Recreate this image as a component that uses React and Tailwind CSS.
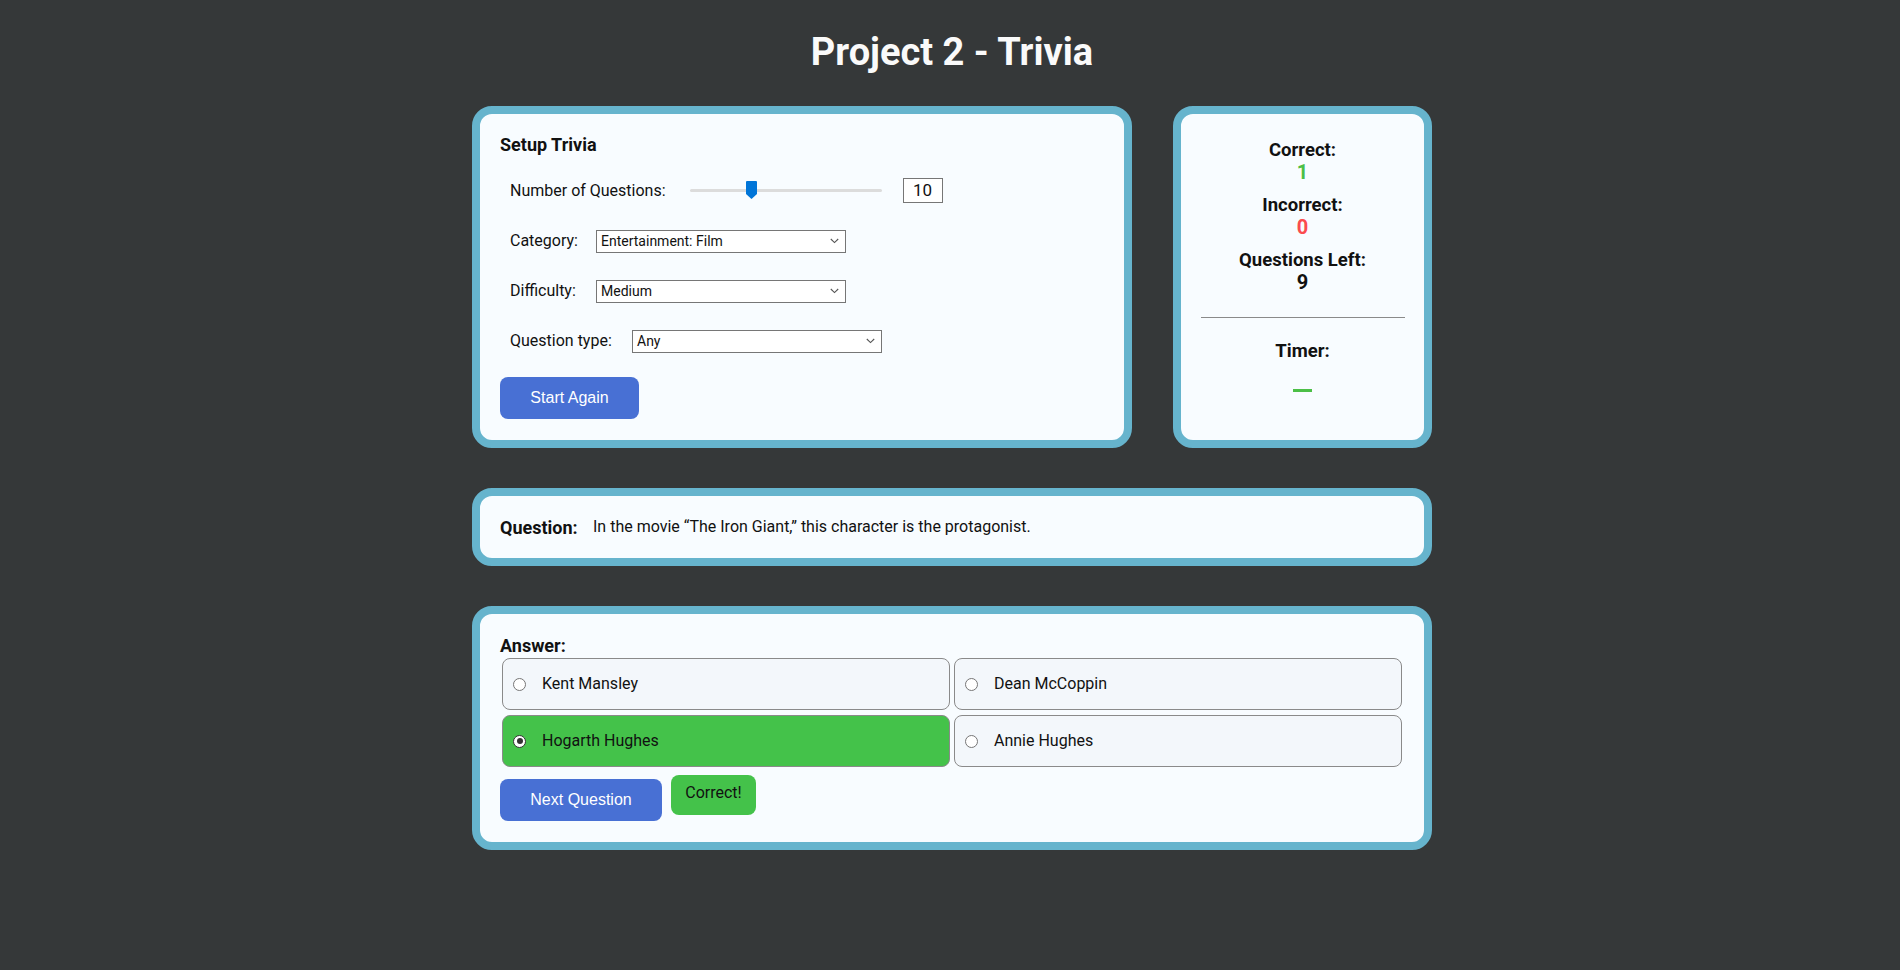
import React from 'react';

const Card = ({ className = '', children }) => (
  <div className={`rounded-[20px] border-[8px] border-[#66b4cd] bg-[#f8fcff] ${className}`}>
    {children}
  </div>
);

const Chevron = () => (
  <svg width="9" height="6" viewBox="0 0 9 6" className="shrink-0">
    <path d="M0.8 1 L4.5 4.6 L8.2 1" fill="none" stroke="#555" strokeWidth="1.1" />
  </svg>
);

const FakeSelect = ({ value, width = 'w-[250px]' }) => (
  <div className={`flex h-[23px] ${width} items-center justify-between border border-[#767676] bg-white pl-[4px] pr-[6px] text-[14px] text-[#111]`}>
    <span>{value}</span>
    <Chevron />
  </div>
);

const Slider = () => (
  <div className="relative h-[25px] w-[192px]">
    <div className="absolute left-0 right-0 top-[11px] h-[3px] rounded-full bg-[#dcdcdc]" />
    <svg width="11" height="18" viewBox="0 0 11 18" className="absolute left-[56px] top-[3px]">
      <path d="M1 0 H10 Q11 0 11 1 V13 L5.5 18 L0 13 V1 Q0 0 1 0 Z" fill="#0075d8" />
    </svg>
  </div>
);

const Radio = ({ checked }) => (
  <span className={`flex h-[13px] w-[13px] shrink-0 items-center justify-center rounded-full border bg-white ${checked ? 'border-[#333]' : 'border-[#767676]'}`}>
    {checked && <span className="h-[6px] w-[6px] rounded-full bg-[#333]" />}
  </span>
);

const answers = [
  { label: 'Kent Mansley', selected: false },
  { label: 'Dean McCoppin', selected: false },
  { label: 'Hogarth Hughes', selected: true },
  { label: 'Annie Hughes', selected: false },
];

export default function App() {
  return (
    <div className="min-h-screen bg-[#353839] pb-[120px] pl-[4px] font-['Roboto',sans-serif] text-[#111]">
      <h1 className="pt-[29px] text-center text-[38px] font-bold leading-[46px] text-[#fafafa]">
        Project 2 - Trivia
      </h1>

      <div className="mx-auto mt-[31px] flex w-[960px] flex-col gap-[40px]">
        <div className="flex gap-[41px]">
          {/* setup */}
          <Card className="h-[342px] w-[660px] px-[20px] pt-[19px]">
            <h3 className="text-[18px] font-bold leading-[24px]">Setup Trivia</h3>

            <div className="mt-[21px] flex h-[25px] items-center pl-[10px] text-[16px]">
              <span className="w-[180px]">Number of Questions:</span>
              <Slider />
              <div className="ml-[21px] flex h-[25px] w-[40px] items-center border border-[#767676] bg-white pl-[9px] text-[17px]">
                10
              </div>
            </div>

            <div className="mt-[26px] flex items-center pl-[10px] text-[16px]">
              <span className="w-[86px]">Category:</span>
              <FakeSelect value="Entertainment: Film" />
            </div>

            <div className="mt-[26px] flex items-center pl-[10px] text-[16px]">
              <span className="w-[86px]">Difficulty:</span>
              <FakeSelect value="Medium" />
            </div>

            <div className="mt-[26px] flex items-center pl-[10px] text-[16px]">
              <span className="w-[122px]">Question type:</span>
              <FakeSelect value="Any" />
            </div>

            <button className="mt-[24px] h-[42px] w-[139px] rounded-[8px] bg-[#4870d4] font-['Liberation_Sans',sans-serif] text-[16px] text-white">
              Start Again
            </button>
          </Card>

          {/* score */}
          <Card className="h-[342px] w-[259px] pt-[25px] text-center">
            <div className="text-[18.5px] font-bold leading-[22px]">Correct:</div>
            <div className="text-[20px] font-bold leading-[22px] text-[#4cbf47]">1</div>
            <div className="mt-[11px] text-[18.5px] font-bold leading-[22px]">Incorrect:</div>
            <div className="text-[20px] font-bold leading-[22px] text-[#fb4b4e]">0</div>
            <div className="mt-[11px] text-[18.5px] font-bold leading-[22px]">Questions Left:</div>
            <div className="text-[20px] font-bold leading-[22px]">9</div>
            <div className="mx-auto mt-[24px] h-px w-[204px] bg-[#8a8a8a]" />
            <div className="mt-[22px] text-[18.5px] font-bold leading-[22px]">Timer:</div>
            <div className="mx-auto mt-[27px] h-[3px] w-[19px] bg-[#4cbf47]" />
          </Card>
        </div>

        {/* question */}
        <Card className="flex h-[78px] items-center px-[20px]">
          <span className="w-[93px] shrink-0 text-[18px] font-bold">Question:</span>
          <span className="text-[16px]">In the movie &ldquo;The Iron Giant,&rdquo; this character is the protagonist.</span>
        </Card>

        {/* answers */}
        <Card className="px-[20px] pb-[21px] pt-[21px]">
          <div className="text-[18px] font-bold leading-[22px]">Answer:</div>
          <div className="mx-[2px] mt-px grid grid-cols-2 gap-x-[4px] gap-y-[5px]">
            {answers.map((a) => (
              <div
                key={a.label}
                className={`flex h-[52px] items-center rounded-[8px] border border-[#8a8a8a] pl-[10px] text-[16px] ${
                  a.selected ? 'bg-[#44c24a]' : 'bg-[#f3f7fb]'
                }`}
              >
                <Radio checked={a.selected} />
                <span className="ml-[16px]">{a.label}</span>
              </div>
            ))}
          </div>
          <div className="mt-[8px] flex items-start">
            <button className="mt-[4px] h-[42px] w-[162px] rounded-[8px] bg-[#4870d4] font-['Liberation_Sans',sans-serif] text-[16px] text-white">
              Next Question
            </button>
            <div className="ml-[9px] flex h-[40px] w-[85px] items-center justify-center rounded-[8px] bg-[#44c24a] pb-[4px] text-[16px]">
              Correct!
            </div>
          </div>
        </Card>
      </div>
    </div>
  );
}
